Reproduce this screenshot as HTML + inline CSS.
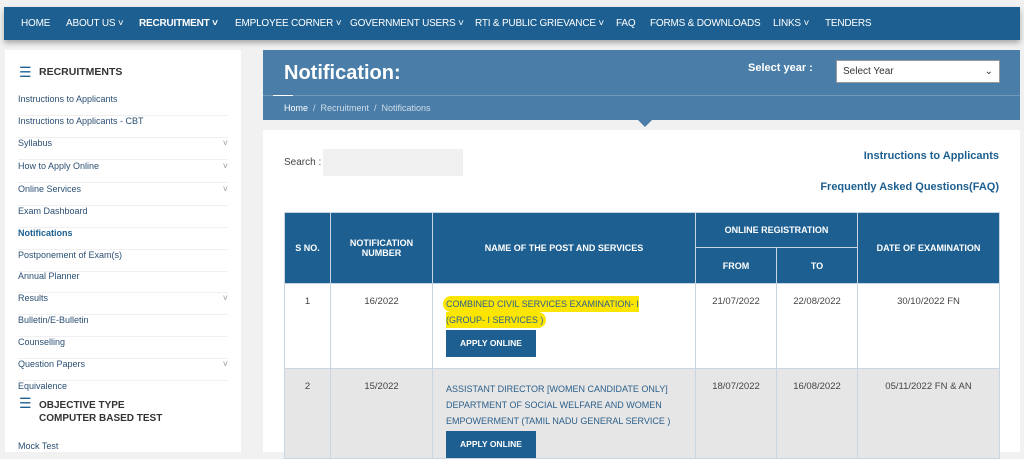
<!DOCTYPE html><html><head><style>
body{margin:0;width:1024px;height:452px;overflow:hidden;background:#f1f1f1;font-family:"Liberation Sans",sans-serif;position:relative}
.a{position:absolute}
.nav{left:4px;top:7px;width:1016px;height:33px;background:#1d5f90;box-shadow:0 3px 5px rgba(0,0,0,.3)}
.nav span{position:absolute;top:11px;color:#fff;font-size:10px;white-space:nowrap;letter-spacing:-0.2px}
.side{left:5px;top:50px;width:236px;height:402px;background:#fff;overflow:hidden}
.si{position:absolute;left:13px;font-size:9px;color:#2b4f73;width:210px;border-bottom:1px solid #f0f0f0;height:21px}
.ban{left:263px;top:50px;width:757px;height:70px;background:#4a7ea8}
.main{left:263px;top:130px;width:757px;height:322px;background:#fff}
table{position:absolute;left:284px;top:212px;border-collapse:collapse;font-size:9.5px;color:#444;table-layout:fixed;width:715px}
th{background:#1d5f90;color:#fff;font-size:9px;border:1px solid #c9d6e2;font-weight:bold;padding:0}
td{border:1px solid #c9d6e2;vertical-align:top;text-align:center;padding:12px 0 0 0}
.btn{display:inline-block;background:#1d5f90;color:#fff;font-weight:bold;font-size:8.5px;width:90px;height:27px;line-height:27px;text-align:center}
</style></head><body>
<div class="a nav">
<span style="left:17px">HOME</span><span style="left:62px">ABOUT US ˅</span><span style="left:135px;font-weight:bold">RECRUITMENT ˅</span><span style="left:231px">EMPLOYEE CORNER ˅</span><span style="left:346px">GOVERNMENT USERS ˅</span><span style="left:471px">RTI &amp; PUBLIC GRIEVANCE ˅</span><span style="left:612px">FAQ</span><span style="left:646px">FORMS &amp; DOWNLOADS</span><span style="left:769px">LINKS ˅</span><span style="left:821px">TENDERS</span>
</div>
<div class="a side">
<div class="a" style="left:14px;top:14px;font-size:14px;color:#1d5f90">☰</div>
<div class="a" style="left:34px;top:16px;font-size:10.5px;font-weight:bold;color:#333">RECRUITMENTS</div>
<div class="si" style="top:44px">Instructions to Applicants</div>
<div class="si" style="top:66px">Instructions to Applicants - CBT</div>
<div class="si" style="top:88px">Syllabus<span style="float:right;color:#999">˅</span></div>
<div class="si" style="top:111px">How to Apply Online<span style="float:right;color:#999">˅</span></div>
<div class="si" style="top:134px">Online Services<span style="float:right;color:#999">˅</span></div>
<div class="si" style="top:156px">Exam Dashboard</div>
<div class="si" style="top:178px;font-weight:bold;color:#1d5f90">Notifications</div>
<div class="si" style="top:200px">Postponement of Exam(s)</div>
<div class="si" style="top:221px">Annual Planner</div>
<div class="si" style="top:243px">Results<span style="float:right;color:#999">˅</span></div>
<div class="si" style="top:265px">Bulletin/E-Bulletin</div>
<div class="si" style="top:287px">Counselling</div>
<div class="si" style="top:309px">Question Papers<span style="float:right;color:#999">˅</span></div>
<div class="si" style="top:331px;border:0">Equivalence</div>
<div class="a" style="left:14px;top:345px;font-size:14px;color:#1d5f90">☰</div>
<div class="a" style="left:34px;top:349px;font-size:10px;font-weight:bold;color:#333;line-height:13px">OBJECTIVE TYPE<br>COMPUTER BASED TEST</div>
<div class="si" style="top:391px">Mock Test</div>
</div>
<div class="a ban">
<div class="a" style="left:21px;top:12px;font-size:20px;font-weight:bold;color:#fff">Notification:</div>
<div class="a" style="left:485px;top:12px;font-size:11px;font-weight:bold;color:#fff">Select year :</div>
<div class="a" style="left:573px;top:10px;width:162px;height:21px;background:#fff;border:1px solid #999;font-size:10px;color:#333;line-height:21px;text-indent:6px">Select Year<span style="float:right;margin-right:6px">⌄</span></div>
<div class="a" style="left:10px;top:45px;width:20px;height:1px;background:#fff"></div>
<div class="a" style="left:0;top:45px;width:757px;height:1px;background:rgba(255,255,255,.2)"></div>
<div class="a" style="left:21px;top:53px;font-size:9px;color:#cfdde9"><span style="color:#fff">Home</span> &nbsp;/&nbsp; Recruitment &nbsp;/&nbsp; Notifications</div>
<div class="a" style="left:375px;top:70px;border:7px solid transparent;border-top-color:#4a7ea8"></div>
</div>
<div class="a main">
<div class="a" style="left:21px;top:27px;font-size:10px;color:#444">Search :</div>
<div class="a" style="left:60px;top:19px;width:140px;height:27px;background:#f0f0f0"></div>
<div class="a" style="right:21px;top:20px;font-size:11px;font-weight:bold;color:#1d5f90">Instructions to Applicants</div>
<div class="a" style="right:21px;top:51px;font-size:11px;font-weight:bold;color:#1d5f90">Frequently Asked Questions(FAQ)</div>
</div>
<table>
<colgroup><col style="width:46px"><col style="width:102px"><col style="width:263px"><col style="width:81px"><col style="width:81px"><col style="width:142px"></colgroup>
<tr style="height:35px"><th rowspan="2">S NO.</th><th rowspan="2">NOTIFICATION<br>NUMBER</th><th rowspan="2">NAME OF THE POST AND SERVICES</th><th colspan="2">ONLINE REGISTRATION</th><th rowspan="2">DATE OF EXAMINATION</th></tr>
<tr style="height:36px"><th>FROM</th><th>TO</th></tr>
<tr style="height:85px;background:#fff"><td>1</td><td>16/2022</td><td style="text-align:left;padding-left:13px;color:#2b5f8a;line-height:16px;font-size:9px"><span style="background:#fce600;box-shadow:0 0 0 3px #fce600;border-radius:6px">COMBINED CIVIL SERVICES EXAMINATION- I<br>(GROUP- I SERVICES )</span><br><span class="btn" style="margin-top:2px">APPLY ONLINE</span></td><td>21/07/2022</td><td>22/08/2022</td><td>30/10/2022 FN</td></tr>
<tr style="height:90px;background:#e6e6e6"><td>2</td><td>15/2022</td><td style="text-align:left;padding-left:13px;color:#2b5f8a;line-height:16px;font-size:9px">ASSISTANT DIRECTOR [WOMEN CANDIDATE ONLY]<br>DEPARTMENT OF SOCIAL WELFARE AND WOMEN<br>EMPOWERMENT (TAMIL NADU GENERAL SERVICE )<br><span class="btn" style="margin-top:2px">APPLY ONLINE</span></td><td>18/07/2022</td><td>16/08/2022</td><td>05/11/2022 FN &amp; AN</td></tr>
</table>
</body></html>
